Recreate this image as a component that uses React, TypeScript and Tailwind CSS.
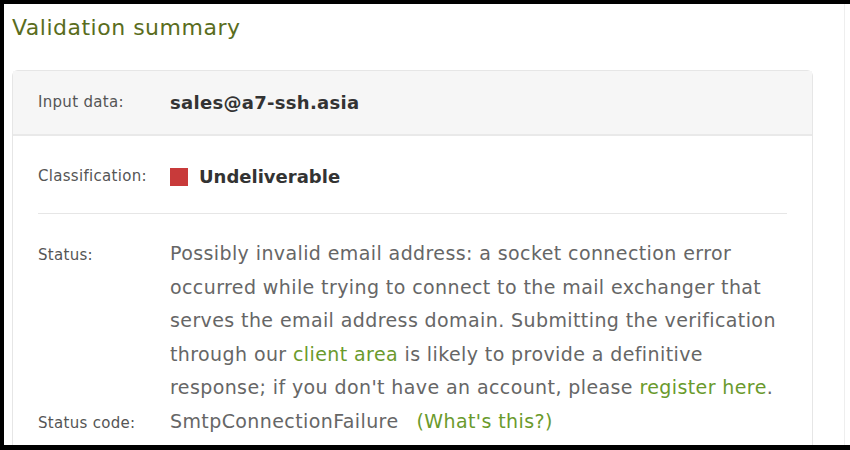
const font = { fontFamily: '"DejaVu Sans", "Liberation Sans", sans-serif' };

const Row = ({
  label,
  children,
  className = "",
}: {
  label: string;
  children: React.ReactNode;
  className?: string;
}) => (
  <div className={`flex ${className}`}>
    <div className="w-[132px] shrink-0 text-[15px] tracking-[0.3px] text-[#555]">{label}</div>
    <div className="flex-1">{children}</div>
  </div>
);

export default function App() {
  return (
    <div
      className="h-[450px] w-[850px] overflow-hidden bg-white border-t-4 border-l-4 border-b-[5px] border-black"
      style={font}
    >
      <div className="flex h-full">
        <div className="w-[840px] shrink-0 pl-2">
          <h1 className="pt-[9px] text-[22px] leading-[30px] tracking-[0.5px] text-[#5a6d1d]">
            Validation summary
          </h1>

          <div className="mt-[27px] w-[801px] rounded-t-md border border-[#e6e6e6] border-b-0">
            <div className="flex h-[65px] items-center border-b-2 border-[#e9e9e9] bg-[#f6f6f6] px-[25px]">
              <div className="w-[132px] shrink-0 text-[15px] tracking-[0.3px] text-[#555]">Input data:</div>
              <div className="text-[18px] font-bold tracking-[0.3px] text-[#333]">sales@a7-ssh.asia</div>
            </div>

            <div className="px-[25px]">
              <Row label="Classification:" className="h-[78px] items-center pt-[4px] border-b border-[#e6e6e6]">
                <div className="flex items-center gap-[11px]">
                  <span className="h-[18px] w-[18px] bg-[#c83a3a]" />
                  <span className="text-[18px] font-bold text-[#333]">Undeliverable</span>
                </div>
              </Row>

              <div className="pt-[23px] pb-6">
                <Row label="Status:" className="items-baseline">
                  <p className="w-[630px] text-[19px] leading-[33.6px] tracking-[0.4px] text-[#666]">
                    Possibly invalid email address: a socket connection error
                    <br />
                    occurred while trying to connect to the mail exchanger that
                    <br />
                    serves the email address domain. Submitting the verification
                    <br />
                    through our <a className="text-[#6a9a2c]">client area</a> is likely to provide a definitive
                    <br />
                    response; if you don't have an account, please{" "}
                    <a className="text-[#6a9a2c]">register here</a>.
                  </p>
                </Row>
                <Row label="Status code:" className="items-baseline">
                  <p className="text-[19px] leading-[33.6px] tracking-[0.4px] text-[#666]">
                    SmtpConnectionFailure
                    <a className="ml-[18px] text-[#6a9a2c]">(What's this?)</a>
                  </p>
                </Row>
              </div>
            </div>
          </div>
        </div>
        <div className="w-px shrink-0 bg-[#eeeeee]" />
      </div>
    </div>
  );
}
